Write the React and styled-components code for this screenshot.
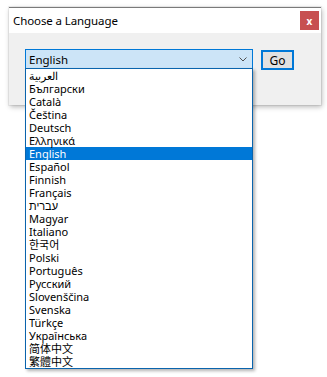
import React, { useState } from 'react';
import styled, { createGlobalStyle } from 'styled-components';

const GlobalStyle = createGlobalStyle`
  html, body {
    margin: 0;
    padding: 0;
    background: #ffffff;
  }
  body {
    font-family: "Noto Sans", "Noto Sans CJK SC", sans-serif;
  }
`;

const Page = styled.div`
  padding: 7px 0 0 9px;
  width: 327px;
  height: 377px;
  box-sizing: border-box;
`;

const Window = styled.div`
  width: 312px;
  height: 98px;
  background: #f0f0f0;
  border-top: 1px solid #7a7a7a;
  box-sizing: border-box;
  box-shadow: 1px 2px 5px rgba(0, 0, 0, 0.28), 0 0 0 1px rgba(0, 0, 0, 0.06);
  display: flex;
  flex-direction: column;
`;

const TitleBar = styled.div`
  height: 25px;
  background: #ffffff;
  display: flex;
  align-items: center;
  justify-content: space-between;
  padding: 0 2px 0 4px;
`;

const Title = styled.div`
  font-size: 11.5px;
  color: #000;
  letter-spacing: -0.1px;
`;

const CloseButton = styled.div`
  width: 19px;
  height: 19px;
  background: #c75050;
  color: #fff;
  font-size: 10px;
  font-weight: 700;
  display: flex;
  align-items: center;
  justify-content: center;
  line-height: 1;
`;

const Body = styled.div`
  flex: 1;
  padding: 16px 0 0 16px;
  display: flex;
  align-items: flex-start;
  gap: 8px;
`;

const ComboWrap = styled.div`
  position: relative;
  width: 228px;
`;

const Combo = styled.div`
  height: 20px;
  box-sizing: border-box;
  border: 1px solid #0078d7;
  background: #cce4f7;
  display: flex;
  align-items: center;
  justify-content: space-between;
  padding: 0 5px 0 3px;
  font-size: 11.5px;
  color: #000;
`;

const Chevron = styled.svg`
  width: 8px;
  height: 5px;
  margin-top: 1px;
`;

const List = styled.ul`
  position: absolute;
  top: 19px;
  left: 0;
  width: 228px;
  margin: 0;
  padding: 0;
  list-style: none;
  background: #fff;
  border: 1px solid #0a64ad;
  box-sizing: border-box;
  box-shadow: 2px 2px 3px rgba(0, 0, 0, 0.3);
  z-index: 2;
`;

const Item = styled.li`
  height: 13px;
  line-height: 13px;
  padding-left: 3px;
  font-size: 11px;
  white-space: nowrap;
  background: ${p => (p.$selected ? '#0078d7' : 'transparent')};
  color: ${p => (p.$selected ? '#fff' : '#000')};
  direction: ltr;
  unicode-bidi: plaintext;
  text-align: left;
`;

const GoButton = styled.button`
  width: 33px;
  height: 20px;
  margin-top: 1px;
  box-sizing: border-box;
  border: 2px solid #0078d7;
  background: #e1e1e1;
  font-family: inherit;
  font-size: 12px;
  color: #000;
  padding: 0;
  display: flex;
  align-items: center;
  justify-content: center;
`;

const languages = [
  'العربية',
  'Български',
  'Català',
  'Čeština',
  'Deutsch',
  'Ελληνικά',
  'English',
  'Español',
  'Finnish',
  'Français',
  'עברית',
  'Magyar',
  'Italiano',
  '한국어',
  'Polski',
  'Português',
  'Русский',
  'Slovenščina',
  'Svenska',
  'Türkçe',
  'Українська',
  '简体中文',
  '繁體中文',
];

const App = () => {
  const [selected, setSelected] = useState('English');

  return (
    <Page>
      <GlobalStyle />
      <Window>
        <TitleBar>
          <Title>Choose a Language</Title>
          <CloseButton>x</CloseButton>
        </TitleBar>
        <Body>
          <ComboWrap>
            <Combo>
              <span>{selected}</span>
              <Chevron viewBox="0 0 8 5">
                <path d="M0.5 0.5 L4 4 L7.5 0.5" fill="none" stroke="#505050" strokeWidth="1" />
              </Chevron>
            </Combo>
            <List>
              {languages.map(lang => (
                <Item
                  key={lang}
                  $selected={lang === selected}
                  lang={/[\u4e00-\u9fff]/.test(lang) ? (lang === '简体中文' ? 'zh-CN' : 'zh-TW') : undefined}
                  onClick={() => setSelected(lang)}
                >
                  {lang}
                </Item>
              ))}
            </List>
          </ComboWrap>
          <GoButton>Go</GoButton>
        </Body>
      </Window>
    </Page>
  );
};

export default App;
